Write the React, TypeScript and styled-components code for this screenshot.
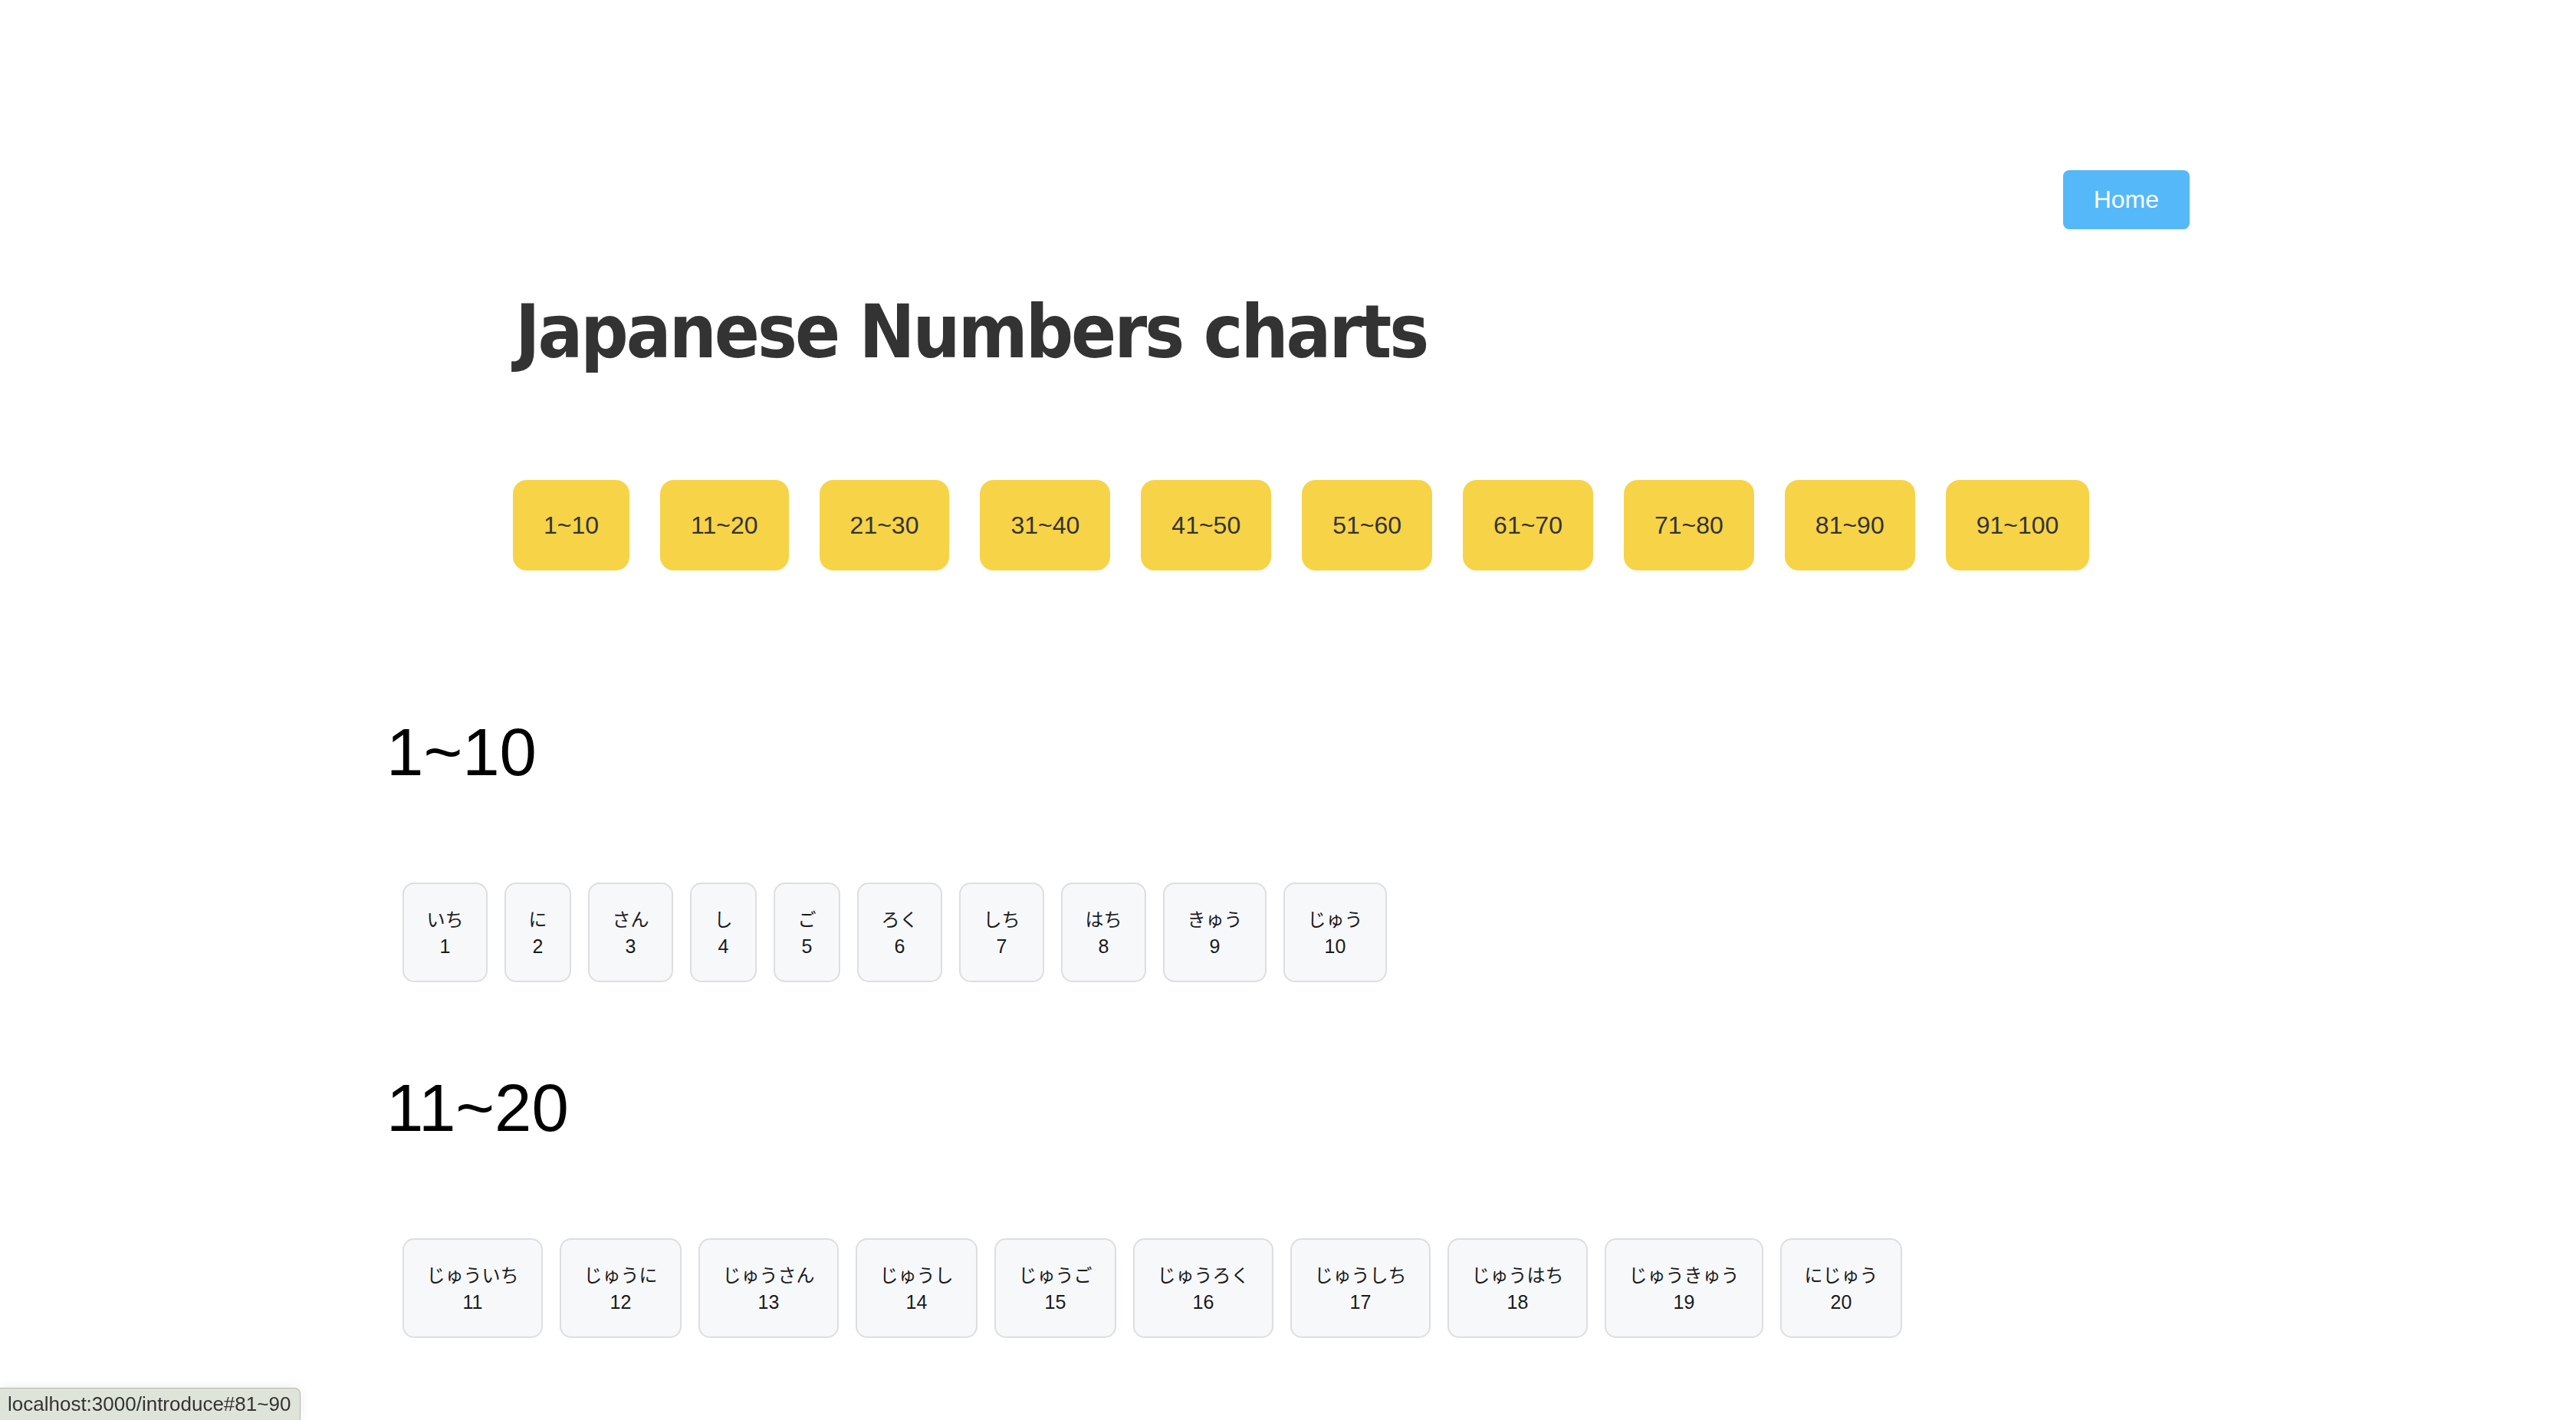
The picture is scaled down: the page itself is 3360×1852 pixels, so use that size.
import React from "react";
import styled, { createGlobalStyle } from "styled-components";

const GlobalStyle = createGlobalStyle`
  html, body {
    margin: 0;
    padding: 0;
    background: #ffffff;
  }
  body {
    font-family: "Liberation Sans", Arial, "Noto Sans CJK JP", sans-serif;
    color: #000;
  }
  * { box-sizing: border-box; }
`;

const Page = styled.div`
  width: 2360px;
  margin: 0 auto;
  padding-top: 222px;
  padding-bottom: 200px;
`;

const TopBar = styled.header`
  display: flex;
  justify-content: flex-end;
  padding-right: 4px;
`;

const HomeButton = styled.a`
  display: inline-flex;
  align-items: center;
  justify-content: center;
  height: 77px;
  padding: 0 40px;
  background: #55b8f9;
  color: #ffffff;
  border-radius: 8px;
  font-size: 32px;
  text-decoration: none;
  font-family: "Liberation Sans", Arial, sans-serif;
`;

const Title = styled.h1`
  margin: 85px 0 0 0;
  padding-left: 172px;
  font-family: "DejaVu Sans Condensed", "DejaVu Sans", sans-serif;
  font-stretch: condensed;
  font-weight: 700;
  font-size: 97px;
  line-height: 97px;
  letter-spacing: -3px;
  color: #333333;
`;

const RangeNav = styled.nav`
  display: flex;
  gap: 40px;
  margin-top: 145px;
  padding-left: 169px;
`;

const RangeButton = styled.a`
  display: inline-flex;
  align-items: center;
  justify-content: center;
  height: 118px;
  padding: 0 40px;
  background: #f7d348;
  color: #333333;
  border-radius: 18px;
  font-size: 32px;
  text-decoration: none;
  font-family: "Liberation Sans", Arial, sans-serif;
`;

const Section = styled.section<{ $first?: boolean }>`
  margin-top: ${(p) => (p.$first ? "193px" : "120px")};
`;

const SectionTitle = styled.h2`
  margin: 0 0 0 4px;
  font-family: "Liberation Sans", Arial, sans-serif;
  font-weight: 400;
  font-size: 87px;
  line-height: 88px;
  color: #000;
`;

const CardRow = styled.div`
  display: flex;
  flex-wrap: wrap;
  gap: 22px;
  margin-top: 126px;
  padding-left: 25px;
`;

const Card = styled.div`
  display: flex;
  flex-direction: column;
  align-items: center;
  padding: 27px 29.5px;
  border: 2px solid #dedede;
  border-radius: 15px;
  background: #f7f8fa;
  font-size: 24px;
  line-height: 36px;
  color: #1a1a1a;
`;

const Reading = styled.span`
  font-family: "Noto Sans CJK JP", sans-serif;
  white-space: nowrap;
`;

const Digits = styled.span`
  font-family: "Liberation Sans", Arial, sans-serif;
  font-size: 25px;
`;

const StatusBubble = styled.div`
  position: fixed;
  left: 0;
  bottom: 0;
  height: 42px;
  padding: 0 12px 0 10px;
  display: flex;
  align-items: center;
  background: #dfe4da;
  border: 1px solid #b4b8b0;
  border-left: none;
  border-bottom: none;
  border-top-right-radius: 8px;
  box-shadow: 0 0 14px rgba(0, 0, 0, 0.08);
  font-family: "Liberation Sans", Arial, sans-serif;
  font-size: 26px;
  color: #333;
`;

const units = ["", "いち", "に", "さん", "し", "ご", "ろく", "しち", "はち", "きゅう"];
const tens = ["", "じゅう", "にじゅう", "さんじゅう", "よんじゅう", "ごじゅう", "ろくじゅう", "ななじゅう", "はちじゅう", "きゅうじゅう"];

function reading(n: number): string {
  if (n === 100) return "ひゃく";
  const t = Math.floor(n / 10);
  const u = n % 10;
  return tens[t] + units[u];
}

const ranges = Array.from({ length: 10 }, (_, i) => {
  const start = i * 10 + 1;
  const end = i * 10 + 10;
  return { label: `${start}~${end}`, start, end };
});

export default function App() {
  return (
    <>
      <GlobalStyle />
      <Page>
        <TopBar>
          <HomeButton href="#">Home</HomeButton>
        </TopBar>
        <Title>Japanese Numbers charts</Title>
        <RangeNav>
          {ranges.map((r) => (
            <RangeButton key={r.label} href={`#${r.label}`}>
              {r.label}
            </RangeButton>
          ))}
        </RangeNav>
        {ranges.map((r, idx) => (
          <Section key={r.label} id={r.label} $first={idx === 0}>
            <SectionTitle>{r.label}</SectionTitle>
            <CardRow>
              {Array.from({ length: 10 }, (_, k) => r.start + k).map((n) => (
                <Card key={n}>
                  <Reading>{reading(n)}</Reading>
                  <Digits>{n}</Digits>
                </Card>
              ))}
            </CardRow>
          </Section>
        ))}
      </Page>
      <StatusBubble>localhost:3000/introduce#81~90</StatusBubble>
    </>
  );
}
